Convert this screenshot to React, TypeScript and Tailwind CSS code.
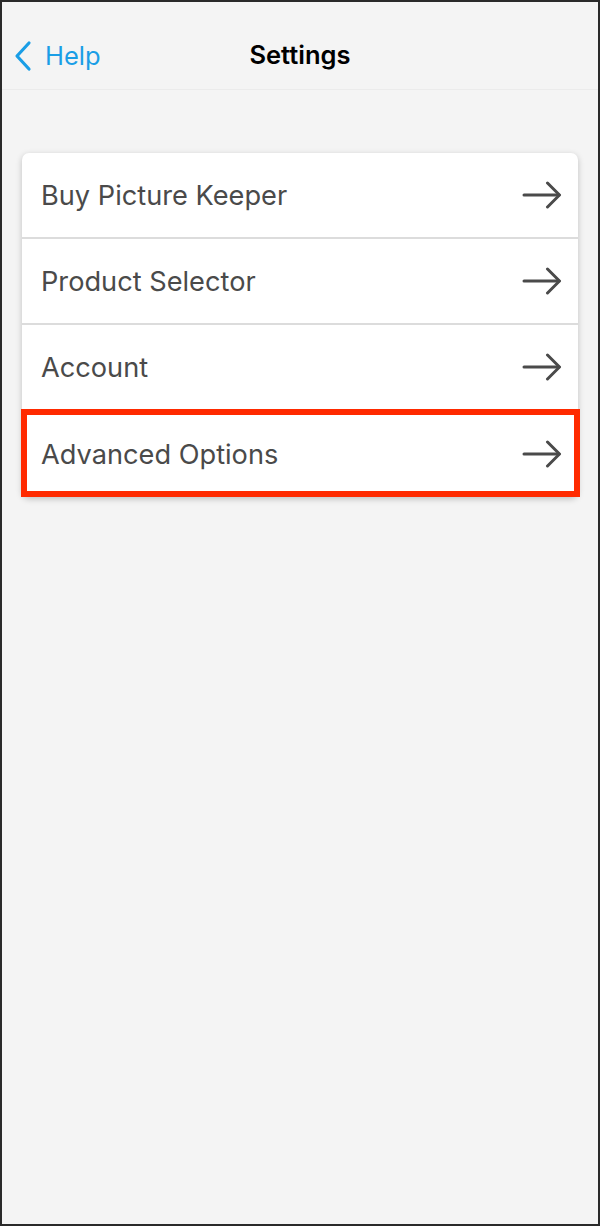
import React from "react";

const Arrow = () => (
  <svg width="40" height="28" viewBox="0 0 40 28" fill="none" className="shrink-0">
    <path d="M2 14 H37" stroke="#4a4a4a" strokeWidth="3" strokeLinecap="round" />
    <path d="M25.5 2 L37.5 14 L25.5 26" stroke="#4a4a4a" strokeWidth="3" strokeLinecap="round" strokeLinejoin="round" />
  </svg>
);

const items = ["Buy Picture Keeper", "Product Selector", "Account", "Advanced Options"];

export default function App() {
  return (
    <div
      className="w-[600px] h-[1226px] border-2 border-[#2a2a2a] bg-[#f4f4f4] flex flex-col"
      style={{ fontFamily: "Inter, 'Liberation Sans', sans-serif" }}
    >
      <div className="h-[88px] shrink-0 border-b border-[#ebebeb] pt-[20px] flex">
        <div className="relative flex-1 flex items-center">
          <div className="flex items-center pl-[11px] gap-[12px] text-[#1a9ee6] text-[25.5px]">
            <svg width="20" height="32" viewBox="0 0 20 32" fill="none">
              <path d="M16 3 L4 16 L16 29" stroke="#1a9ee6" strokeWidth="3.2" strokeLinecap="round" strokeLinejoin="round" />
            </svg>
            <span className="leading-none">Help</span>
          </div>
          <div className="absolute inset-0 flex items-center justify-center text-[25.5px] font-semibold text-black pointer-events-none">
            Settings
          </div>
        </div>
      </div>
      <div className="mx-[20px] mt-[63px] bg-white rounded-[7px] shadow-[0_2px_6px_rgba(0,0,0,0.22)]">
        {items.map((label, i) => (
          <div
            key={label}
            className={`relative h-[86px] flex items-center justify-between pl-[19px] pr-[16px] ${
              i < items.length - 1 ? "border-b-2 border-[#dcdcdc]" : ""
            }`}
          >
            <span className="text-[27.2px] text-[#4a4a4a] pt-[3px]">{label}</span>
            <Arrow />
            {i === items.length - 1 && (
              <div className="absolute -top-[2px] -left-[1px] -right-[2px] bottom-0 border-[6px] border-[#ff2a00]" />
            )}
          </div>
        ))}
      </div>
    </div>
  );
}
